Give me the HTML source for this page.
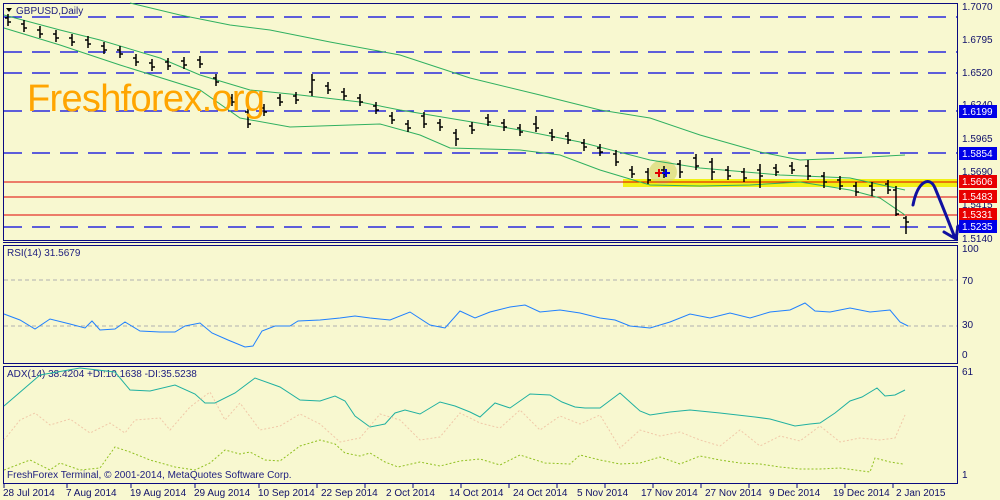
<!DOCTYPE html><html><head><style>
body{margin:0;background:#F8F8D0;width:1000px;height:500px;overflow:hidden;font-family:"Liberation Sans",Tahoma,sans-serif}
svg{display:block}
text{font-family:"Liberation Sans",sans-serif;font-size:10px;fill:#10106a}
</style></head><body>
<svg width="1000" height="500" viewBox="0 0 1000 500">
<rect width="1000" height="500" fill="#F8F8D0"/>
<g fill="none" stroke="#0a0a80" stroke-width="1">
<rect x="3.5" y="3.5" width="954" height="237"/>
<line x1="3" y1="242.5" x2="958" y2="242.5"/>
<rect x="3.5" y="245.5" width="954" height="118"/>
<rect x="3.5" y="366.5" width="954" height="117"/>
</g>
<g stroke="#0000e0" stroke-width="1.2" stroke-dasharray="18,10">
<line x1="4" y1="17" x2="957" y2="17"/>
<line x1="4" y1="52" x2="957" y2="52"/>
<line x1="4" y1="73" x2="957" y2="73"/>
<line x1="4" y1="111" x2="957" y2="111"/>
<line x1="4" y1="153" x2="957" y2="153"/>
<line x1="4" y1="227" x2="957" y2="227"/>
</g>
<rect x="623" y="179" width="334" height="8" fill="#f0f000" opacity="0.9"/>
<ellipse cx="663" cy="172" rx="14" ry="12" fill="#d8d870" opacity="0.7"/>
<g stroke="#e00000" stroke-width="1">
<line x1="4" y1="182" x2="957" y2="182"/>
<line x1="4" y1="197" x2="957" y2="197"/>
<line x1="4" y1="215" x2="957" y2="215"/>
</g>
<g fill="none" stroke="#30b060" stroke-width="1">
<polyline points="130,3 180,15 230,25 270,30 330,42 400,55 470,78 540,95 600,110 650,118 700,135 760,152 800,160 850,158 905,155"/>
<polyline points="4,15 60,30 100,40 160,58 200,75 250,90 300,95 360,102 400,110 460,120 520,130 580,142 650,160 700,168 780,175 850,178 905,190"/>
<polyline points="4,28 60,45 120,65 200,90 240,118 290,127 380,124 420,135 450,148 520,150 560,155 600,170 650,185 700,186 750,185 800,182 850,190 880,198 905,215"/>
</g>
<path fill="none" stroke="#000" stroke-width="1.5" d="
M8 14V26M5 18h3M8 22h3
M24 20V32M21 24h3M24 28h3
M40 26V38M37 30h3M40 34h3
M56 30V42M53 34h3M56 38h3
M72 34V46M69 38h3M72 42h3
M88 36V48M85 40h3M88 44h3
M104 42V54M101 46h3M104 50h3
M120 46V58M117 50h3M120 54h3
M136 54V66M133 58h3M136 62h3
M152 59V71M149 63h3M152 67h3
M168 58V70M165 62h3M168 66h3
M184 57V69M181 61h3M184 65h3
M200 56V68M197 60h3M200 64h3
M216 74V86M213 78h3M216 82h3
M232 94V106M229 98h3M232 102h3
M248 108V128M245 112h3M248 124h3
M264 104V116M261 108h3M264 112h3
M280 94V106M277 98h3M280 102h3
M296 92V104M293 96h3M296 100h3
M312 74V96M309 92h3M312 80h3
M328 82V94M325 86h3M328 90h3
M344 88V100M341 92h3M344 96h3
M360 94V106M357 98h3M360 102h3
M376 102V114M373 106h3M376 110h3
M392 112V124M389 116h3M392 120h3
M408 120V132M405 124h3M408 128h3
M424 112V128M421 116h3M424 124h3
M440 119V131M437 123h3M440 127h3
M456 129V146M453 133h3M456 139h3
M472 122V134M469 126h3M472 130h3
M488 114V126M485 118h3M488 122h3
M504 119V131M501 123h3M504 127h3
M520 124V136M517 128h3M520 132h3
M536 116V132M533 124h3M536 128h3
M552 129V141M549 133h3M552 137h3
M568 132V144M565 136h3M568 140h3
M584 139V151M581 143h3M584 147h3
M600 144V156M597 148h3M600 152h3
M616 150V166M613 154h3M616 162h3
M632 166V178M629 170h3M632 174h3
M648 168V184M645 172h3M648 180h3
M664 166V178M661 170h3M664 174h3
M680 160V178M677 164h3M680 172h3
M696 154V170M693 158h3M696 166h3
M712 158V180M709 162h3M712 172h3
M728 166V180M725 170h3M728 176h3
M744 168V182M741 172h3M744 178h3
M760 164V188M757 170h3M760 176h3
M776 164V176M773 168h3M776 172h3
M792 162V174M789 166h3M792 170h3
M808 160V180M805 166h3M808 176h3
M824 172V188M821 176h3M824 182h3
M840 176V190M837 180h3M840 186h3
M856 182V196M853 186h3M856 192h3
M872 182V196M869 186h3M872 190h3
M888 180V194M885 184h3M888 190h3
M896 186V216M893 190h3M896 214h3
M906 216V234M903 218h3M906 222h3"/>
<path d="M655 173h8M659 169v8" stroke="#e00000" stroke-width="2"/>
<path d="M662 173h8M666 169v8" stroke="#0000e0" stroke-width="2"/>
<path d="M913 205 C918 180 930 176 935 188 C940 200 948 220 955 238 M944 232 L956 239 L958 226" fill="none" stroke="#1010a0" stroke-width="3" stroke-linecap="round"/>
<path d="M6 8h6l-3 4z" fill="#000"/>
<text x="16" y="14" font-size="10" style="fill:#202080">GBPUSD,Daily</text>
<text x="27" y="111" textLength="238" style="font-size:38px;fill:#ffa500;font-family:'Liberation Sans',sans-serif">Freshforex.org</text>
<g>
<text x="962" y="10">1.7070</text>
<text x="962" y="43">1.6795</text>
<text x="962" y="76">1.6520</text>
<text x="962" y="108">1.6240</text>
<text x="962" y="142">1.5965</text>
<text x="962" y="175">1.5690</text>
<text x="962" y="208">1.5415</text>
<text x="962" y="242">1.5140</text>
</g>
<rect x="959" y="105" width="38" height="13" fill="#0000e8"/><text x="962" y="115" style="fill:#fff">1.6199</text>
<rect x="959" y="147" width="38" height="13" fill="#0000e8"/><text x="962" y="157" style="fill:#fff">1.5854</text>
<rect x="959" y="175" width="38" height="13" fill="#e80000"/><text x="962" y="185" style="fill:#fff">1.5606</text>
<rect x="959" y="190" width="38" height="13" fill="#e80000"/><text x="962" y="200" style="fill:#fff">1.5483</text>
<rect x="959" y="208" width="38" height="13" fill="#e80000"/><text x="962" y="218" style="fill:#fff">1.5331</text>
<rect x="959" y="220" width="38" height="13" fill="#0000e8"/><text x="962" y="230" style="fill:#fff">1.5235</text>
<text x="7" y="256" style="fill:#202080">RSI(14) 31.5679</text>
<g stroke="#b0b0b0" stroke-dasharray="4,3"><line x1="4" y1="280" x2="957" y2="280"/><line x1="4" y1="326" x2="957" y2="326"/></g>
<polyline fill="none" stroke="#2080ff" stroke-width="1" points="4,314 20,320 35,329 50,319 70,324 85,328 92,321 100,330 115,329 125,322 140,331 160,332 175,332 185,326 200,323 212,333 228,340 245,347 253,346 262,331 275,326 290,326 298,321 320,320 340,318 355,316 370,318 390,320 410,312 430,325 445,328 460,311 475,318 490,312 510,307 525,305 540,312 560,310 580,313 600,318 615,320 630,326 650,328 670,322 690,314 710,318 730,313 750,318 770,312 790,310 805,303 815,311 830,312 850,308 870,312 890,310 900,322 908,326"/>
<text x="962" y="252">100</text><text x="962" y="284">70</text><text x="962" y="328">30</text><text x="962" y="358">0</text>
<text x="7" y="377" style="fill:#202080">ADX(14) 38.4204 +DI:10.1638 -DI:35.5238</text>
<polyline fill="none" stroke="#20b0a0" stroke-width="1" points="4,406 40,375 80,368 115,372 130,390 150,391 175,385 195,394 205,403 215,403 235,393 255,378 280,387 300,400 320,401 335,396 345,401 355,416 370,427 385,424 395,413 405,410 420,414 440,402 455,406 470,412 480,417 495,403 510,408 530,394 550,395 562,402 575,407 585,408 600,408 620,393 640,411 650,415 670,412 690,410 720,413 755,417 770,419 795,426 810,424 820,423 835,413 850,401 862,397 877,388 885,396 895,395 905,390"/>
<polyline fill="none" stroke="#f0c8a8" stroke-width="1" stroke-dasharray="2,2" points="4,440 20,420 35,413 50,425 70,419 90,433 110,423 125,433 135,420 160,418 170,430 190,407 210,392 225,420 240,403 260,430 280,426 300,414 320,424 340,442 360,438 380,414 400,420 420,440 440,437 460,413 480,423 500,428 520,410 540,430 560,416 580,424 600,415 620,448 640,430 660,436 680,432 700,440 720,446 740,430 760,446 780,436 800,441 820,426 840,442 860,438 880,440 895,438 905,415"/>
<polyline fill="none" stroke="#90c020" stroke-width="1" stroke-dasharray="2,2" points="4,470 30,460 50,470 60,463 80,470 100,468 115,447 130,452 150,460 175,467 195,470 210,463 225,450 240,454 250,452 265,460 280,461 300,446 320,440 335,444 345,453 360,456 370,453 385,462 398,467 420,462 440,466 460,461 480,459 500,465 520,455 545,463 570,464 580,455 600,460 620,464 640,463 660,457 680,464 700,456 720,460 740,463 760,464 780,467 800,469 820,469 840,468 870,472 875,458 890,462 903,464"/>
<text x="962" y="375">61</text><text x="962" y="478">1</text>
<text x="7" y="478" style="fill:#202080">FreshForex Terminal, © 2001-2014, MetaQuotes Software Corp.</text>
<g stroke="#0a0a80"><line x1="4" y1="484" x2="4" y2="488"/><line x1="67" y1="484" x2="67" y2="488"/><line x1="131" y1="484" x2="131" y2="488"/><line x1="195" y1="484" x2="195" y2="488"/><line x1="259" y1="484" x2="259" y2="488"/><line x1="317" y1="484" x2="317" y2="488"/><line x1="365" y1="484" x2="365" y2="488"/><line x1="413" y1="484" x2="413" y2="488"/><line x1="461" y1="484" x2="461" y2="488"/><line x1="509" y1="484" x2="509" y2="488"/><line x1="557" y1="484" x2="557" y2="488"/><line x1="605" y1="484" x2="605" y2="488"/><line x1="653" y1="484" x2="653" y2="488"/><line x1="701" y1="484" x2="701" y2="488"/><line x1="749" y1="484" x2="749" y2="488"/><line x1="797" y1="484" x2="797" y2="488"/><line x1="845" y1="484" x2="845" y2="488"/><line x1="893" y1="484" x2="893" y2="488"/></g>
<g font-size="10">
<text x="3" y="496">28 Jul 2014</text><text x="66" y="496">7 Aug 2014</text><text x="130" y="496">19 Aug 2014</text><text x="194" y="496">29 Aug 2014</text><text x="258" y="496">10 Sep 2014</text><text x="321" y="496">22 Sep 2014</text><text x="386" y="496">2 Oct 2014</text><text x="449" y="496">14 Oct 2014</text><text x="513" y="496">24 Oct 2014</text><text x="577" y="496">5 Nov 2014</text><text x="641" y="496">17 Nov 2014</text><text x="705" y="496">27 Nov 2014</text><text x="769" y="496">9 Dec 2014</text><text x="833" y="496">19 Dec 2014</text><text x="896" y="496">2 Jan 2015</text>
</g>
</svg>
</body></html>
